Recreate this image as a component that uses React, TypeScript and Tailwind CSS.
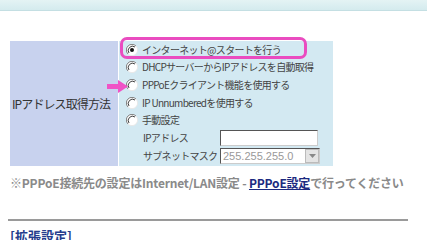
const jp = { fontFamily: '"Noto Sans CJK JP", "Liberation Sans", sans-serif' };

function Radio({ checked }: { checked?: boolean }) {
  return (
    <svg width="12" height="12" viewBox="0 0 12 12" className="shrink-0">
      <circle cx="6" cy="6" r="5.5" fill="#fff" />
      <path d="M10 2 A5.5 5.5 0 0 0 2 10" fill="none" stroke="#808080" strokeWidth="1" />
      <path d="M9 3 A4.3 4.3 0 0 0 3 9" fill="none" stroke="#404040" strokeWidth="1" />
      <path d="M2 10 A5.5 5.5 0 0 0 10 2" fill="none" stroke="#e8e8e8" strokeWidth="1" />
      {checked && <circle cx="6" cy="6" r="2" fill="#111" />}
    </svg>
  );
}

function RadioRow({ label, checked }: { label: string; checked?: boolean }) {
  return (
    <div className="h-[17.6px] flex items-center gap-[4px] pl-[7px]">
      <Radio checked={checked} />
      <span className="text-[10px] tracking-[-0.7px] text-[#444] leading-none whitespace-nowrap">{label}</span>
    </div>
  );
}

export default function App() {
  return (
    <div className="w-[427px] h-[240px] overflow-hidden bg-white" style={jp}>
      <div className="h-[11px] bg-gradient-to-b from-[#e4f3f4] to-[#d4ebee] border-b border-[#c4dfe3]" />

      <div className="relative ml-[10px] mt-[30px] w-[323px] h-[125px] flex gap-[1px]">
        <div className="w-[108px] bg-[#c8d2ee] flex items-center pl-[2px]">
          <span className="text-[12px] tracking-[-0.9px] text-[#333] whitespace-nowrap">IPアドレス取得方法</span>
        </div>
        <div className="flex-1 bg-[#d3e9f2] flex flex-col">
          <RadioRow label="インターネット@スタートを行う" checked />
          <RadioRow label="DHCPサーバーからIPアドレスを自動取得" />
          <RadioRow label="PPPoEクライアント機能を使用する" />
          <RadioRow label="IP Unnumberedを使用する" />
          <RadioRow label="手動設定" />
          <div className="h-[18px] flex items-center pl-[24px]">
            <span className="w-[77px] text-[10px] tracking-[-0.7px] text-[#444]">IPアドレス</span>
            <div className="w-[98px] h-[16px] bg-white border border-[#555] border-r-[#ccc] border-b-[#ccc]" />
          </div>
          <div className="h-[18px] flex items-center pl-[24px]">
            <span className="w-[77px] text-[10px] tracking-[-0.7px] text-[#444] whitespace-nowrap">サブネットマスク</span>
            <div className="w-[100px] h-[16px] bg-white border border-[#555] border-r-[#ccc] border-b-[#ccc] flex items-center">
              <span className="flex-1 pl-[2px] text-[11px] text-[#999]" style={{ fontFamily: '"Liberation Sans", sans-serif' }}>255.255.255.0</span>
              <div className="w-[14px] h-[14px] bg-[#e4e4e4] border border-[#bbb] flex items-center justify-center">
                <svg width="7" height="4" viewBox="0 0 7 4"><path d="M0 0 H7 L3.5 4 Z" fill="#888" /></svg>
              </div>
            </div>
          </div>
        </div>

        <div className="absolute left-[110px] top-[-4px] w-[187px] h-[22px] border-[3px] border-[#ea4cc0] rounded-[7px]" />
        <svg className="absolute left-[97px] top-[39px]" width="22" height="13" viewBox="0 0 22 13">
          <rect x="0" y="4" width="13" height="5" fill="#f052c6" />
          <path d="M11 0 L21 6.5 L11 13 Z" fill="#f052c6" />
        </svg>
      </div>

      <div className="mt-[11px] ml-[10px] text-[12px] font-bold text-[#8a8a8a] tracking-[-0.2px] whitespace-nowrap leading-none">
        ※PPPoE接続先の設定はInternet/LAN設定 - <span className="text-[#1c2a80] underline">PPPoE設定</span>で行ってください
      </div>

      <div className="mt-[30px] ml-[8px] w-[400px] h-[2px] bg-[#9a9a9a]" />

      <div className="mt-[8px] ml-[10px] text-[13px] font-bold text-[#243c8c] leading-none">[拡張設定]</div>
    </div>
  );
}
